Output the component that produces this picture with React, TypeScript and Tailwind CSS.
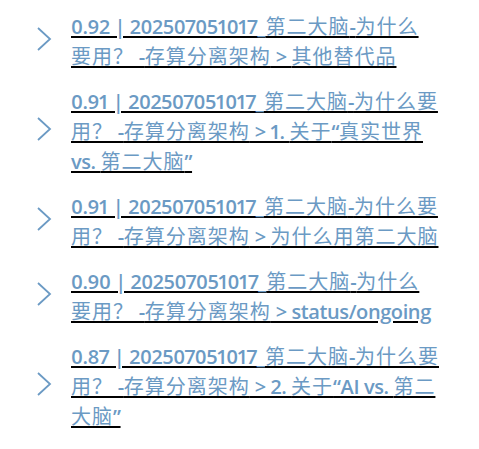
import React from "react";

const items = [
  "0.92 | 202507051017_第二大脑-为什么要用？ -存算分离架构 > 其他替代品",
  "0.91 | 202507051017_第二大脑-为什么要用？ -存算分离架构 > 1. 关于“真实世界 vs. 第二大脑”",
  "0.91 | 202507051017_第二大脑-为什么要用？ -存算分离架构 > 为什么用第二大脑",
  "0.90 | 202507051017_第二大脑-为什么要用？ -存算分离架构 > status/ongoing",
  "0.87 | 202507051017_第二大脑-为什么要用？ -存算分离架构 > 2. 关于“AI vs. 第二大脑”",
];

function Segments({ text }: { text: string }) {
  const parts = text.split(/([\u3000-\u9fff\uff00-\uffef]+)/).filter((p) => p.length > 0);
  return (
    <>
      {parts.map((p, i) =>
        /[\u3000-\u9fff\uff00-\uffef]/.test(p) ? (
          <span key={i} className="font-normal leading-[28px] tracking-[1px] [font-family:'Noto_Sans_CJK_SC',sans-serif]">
            {p}
          </span>
        ) : (
          <span key={i} className="font-semibold tracking-[-0.4px] proportional-nums">
            {p}
          </span>
        )
      )}
    </>
  );
}

function Chevron() {
  return (
    <svg width="16" height="24" viewBox="0 0 16 24" className="shrink-0 -mt-[6px]">
      <polyline points="2,1 14,12 2,23" fill="none" stroke="#6b9ac4" strokeWidth="1.8" strokeLinejoin="miter" />
    </svg>
  );
}

export default function App() {
  return (
    <div className="w-[479px] h-[449px] bg-white pt-[12px] pl-[36px] [font-family:'Open_Sans','Noto_Sans_CJK_SC',sans-serif]">
      <div className="flex flex-col gap-[15px]">
        {items.map((t, i) => (
          <div key={i} className="flex items-center gap-[19px]">
            <Chevron />
            <a className="block w-[368.3px] text-[20px] leading-[30px] text-[#6b9ac4] underline decoration-black decoration-2 underline-offset-[2px] cursor-pointer">
              <Segments text={t} />
            </a>
          </div>
        ))}
      </div>
    </div>
  );
}
